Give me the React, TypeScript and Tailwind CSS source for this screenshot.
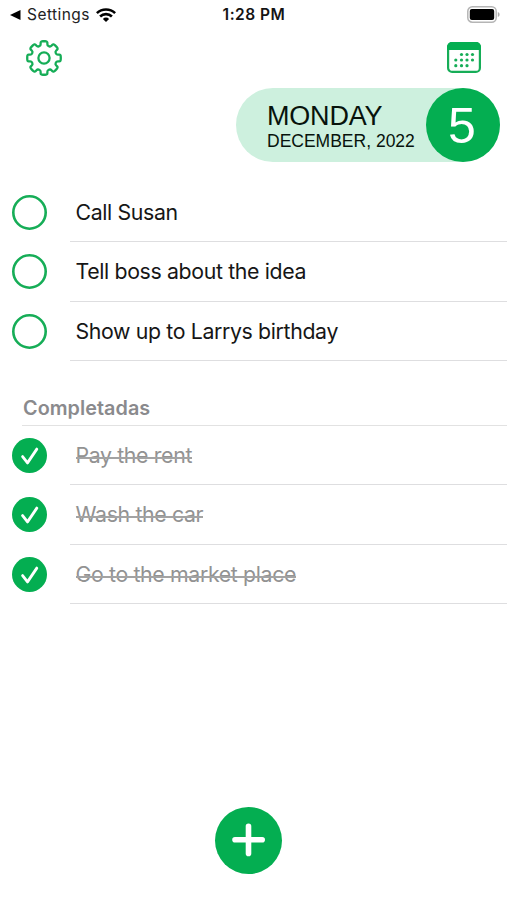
import { useState } from "react";

interface Task {
  id: number;
  title: string;
  done: boolean;
}

const INITIAL_TASKS: Task[] = [
  { id: 1, title: "Call Susan", done: false },
  { id: 2, title: "Tell boss about the idea", done: false },
  { id: 3, title: "Show up to Larrys birthday", done: false },
  { id: 4, title: "Pay the rent", done: true },
  { id: 5, title: "Wash the car", done: true },
  { id: 6, title: "Go to the market place", done: true },
];

export default function App() {
  const [tasks, setTasks] = useState(INITIAL_TASKS);

  const toggle = (id: number) =>
    setTasks((prev) =>
      prev.map((t) => (t.id === id ? { ...t, done: !t.done } : t)),
    );

  return (
    <main className="flex h-[900px] w-[507px] flex-col overflow-hidden bg-white font-['Inter',sans-serif] text-[#141414]">
      <StatusBar />

      <div className="flex h-[58px] items-center justify-between pl-[25px] pr-[26px]">
        <button type="button" aria-label="Settings">
          <GearIcon />
        </button>
        <button type="button" aria-label="Calendar" className="pb-px">
          <CalendarIcon />
        </button>
      </div>

      <DatePill />

      <ul className="mt-[21px]">
        {tasks
          .filter((t) => !t.done)
          .map((t) => (
            <TaskRow key={t.id} task={t} onToggle={() => toggle(t.id)} />
          ))}
      </ul>

      <h2 className="ml-[22px] mt-[26px] flex h-[39px] items-center border-b border-[#e2e2e2] pl-px pt-[5px] text-[19.8px] font-semibold tracking-[0.05px] text-[#8a8a8d]">
        Completadas
      </h2>
      <ul>
        {tasks
          .filter((t) => t.done)
          .map((t) => (
            <TaskRow key={t.id} task={t} onToggle={() => toggle(t.id)} />
          ))}
      </ul>

      <button
        type="button"
        aria-label="Add task"
        className="mb-[26.5px] ml-[215px] mt-auto grid size-[67px] place-items-center rounded-full bg-[#04ae51]"
      >
        <svg width="34" height="34" viewBox="0 0 34 34" className="text-white">
          <path
            d="M16.5 3.2v27.2M3 16.8h27.2"
            stroke="currentColor"
            strokeWidth="5.6"
            strokeLinecap="round"
          />
        </svg>
      </button>
    </main>
  );
}

function StatusBar() {
  return (
    <div className="grid h-[29px] grid-cols-3 items-center pl-[10px] pr-[7px] text-[15.5px]">
      <div className="flex items-center">
        <svg width="11" height="10" viewBox="0 0 11 10">
          <path d="M0 5 10.5 0v10z" fill="#000" />
        </svg>
        <span className="ml-[6px] pt-px tracking-[0.45px] text-[#222]">Settings</span>
        <WifiIcon />
      </div>
      <span className="pr-[2px] pt-px text-center font-semibold tracking-[0.5px]">
        1:28 PM
      </span>
      <BatteryIcon />
    </div>
  );
}

function DatePill() {
  return (
    <div className="ml-[236px] mt-px flex h-[74px] w-[264px] items-center justify-between rounded-full bg-[#cdf0de] pl-[31px] font-['Liberation_Sans',sans-serif] text-[#07130c]">
      <div className="whitespace-nowrap pt-[3px]">
        <p className="text-[27px] leading-[29px] tracking-[-0.2px]">MONDAY</p>
        <p className="text-[17.5px] leading-[21px]">DECEMBER, 2022</p>
      </div>
      <span className="grid size-[74px] place-items-center rounded-full bg-[#04ae51] pr-[2px] pt-px text-[50px] leading-none text-white">
        5
      </span>
    </div>
  );
}

function TaskRow({ task, onToggle }: { task: Task; onToggle: () => void }) {
  return (
    <li className="flex h-[59.33px] pl-[12px]">
      <button
        type="button"
        onClick={onToggle}
        aria-pressed={task.done}
        aria-label={task.title}
        className="mt-[12px] size-[35px] shrink-0"
      >
        <svg width="35" height="35" viewBox="0 0 35 35" fill="none">
          {task.done ? (
            <>
              <circle cx="17.5" cy="17.5" r="17.5" fill="#04ae51" />
              <path
                d="m10.6 18.6 4.9 6.3 9.3-13.8"
                stroke="#fff"
                strokeWidth="2.8"
                strokeLinecap="round"
                strokeLinejoin="round"
              />
            </>
          ) : (
            <circle cx="17.5" cy="17.5" r="16.2" stroke="#16ad57" strokeWidth="2.6" />
          )}
        </svg>
      </button>
      <div className="ml-[23px] flex flex-1 items-center border-b border-[#dedee0] pl-[5.5px] pt-[1.6px] text-[21.3px] tracking-[-0.36px]">
        <span
          className={
            task.done
              ? "relative text-[#929292] after:absolute after:inset-x-0 after:top-[17px] after:h-[2px] after:bg-[#a3a3a3]"
              : "text-[#161616]"
          }
        >
          {task.title}
        </span>
      </div>
    </li>
  );
}

// Builds an eight-tooth cog with softened corners around (19, 19).
function cogPath() {
  const pts: [number, number][] = [];
  for (let i = 0; i < 8; i++) {
    for (const [offset, radius] of [
      [-15, 12.9],
      [-11.5, 17.1],
      [11.5, 17.1],
      [15, 12.9],
    ]) {
      const a = ((i * 45 - 90 + offset) * Math.PI) / 180;
      pts.push([19 + radius * Math.cos(a), 19 + radius * Math.sin(a)]);
    }
  }
  const n = pts.length;
  const mix = (a: [number, number], b: [number, number], t: number) =>
    `${(a[0] + (b[0] - a[0]) * t).toFixed(2)} ${(a[1] + (b[1] - a[1]) * t).toFixed(2)}`;
  return (
    pts
      .map((p, i) => {
        const prev = pts[(i + n - 1) % n];
        const next = pts[(i + 1) % n];
        return `${i ? "L" : "M"}${mix(p, prev, 0.35)}Q${p[0].toFixed(2)} ${p[1].toFixed(2)} ${mix(p, next, 0.35)}`;
      })
      .join("") + "Z"
  );
}

const COG = cogPath();

function GearIcon() {
  return (
    <svg width="38" height="38" viewBox="0 0 38 38" fill="none" stroke="#16ad57" strokeWidth="2.3">
      <path d={COG} strokeLinejoin="round" />
      <circle cx="19" cy="19" r="5.6" />
    </svg>
  );
}

function CalendarIcon() {
  const dots = [
    [14.5, 12.5], [20, 12.5], [25.5, 12.5],
    [8.8, 18], [14.5, 18], [20, 18], [25.5, 18],
    [8.8, 23.7], [14.5, 23.7], [20, 23.7],
  ];
  return (
    <svg width="34" height="31" viewBox="0 0 34 31" fill="none">
      <rect x="1.1" y="1.1" width="31.8" height="28.8" rx="4" stroke="#16ad57" strokeWidth="2.2" />
      <path d="M0 8V5a5 5 0 0 1 5-5h24a5 5 0 0 1 5 5v3z" fill="#04ae51" />
      {dots.map(([x, y]) => (
        <circle key={`${x}-${y}`} cx={x} cy={y} r="1.6" fill="#16ad57" />
      ))}
    </svg>
  );
}

function WifiIcon() {
  return (
    <svg width="20" height="14" viewBox="0 0 20 14" fill="none" stroke="#000" strokeWidth="2.6" className="ml-[6px]">
      <path d="M.9 5.1a13.2 13.2 0 0 1 18.2 0" />
      <path d="M4.1 8.5a8.5 8.5 0 0 1 11.8 0" />
      <path d="M10 14 6.9 10.9a4.4 4.4 0 0 1 6.2 0z" fill="#000" stroke="none" />
    </svg>
  );
}

function BatteryIcon() {
  return (
    <svg width="33" height="17" viewBox="0 0 33 17" className="justify-self-end">
      <rect x=".8" y=".8" width="28.4" height="15.4" rx="4.5" fill="#fff" stroke="#b5b5b5" strokeWidth="1.5" />
      <rect x="2.8" y="3" width="24.4" height="11" rx="2" fill="#000" />
      <path d="M30.8 6v5c1.3-.5 1.8-1.4 1.8-2.5s-.5-2-1.8-2.5z" fill="#aaa" />
    </svg>
  );
}
